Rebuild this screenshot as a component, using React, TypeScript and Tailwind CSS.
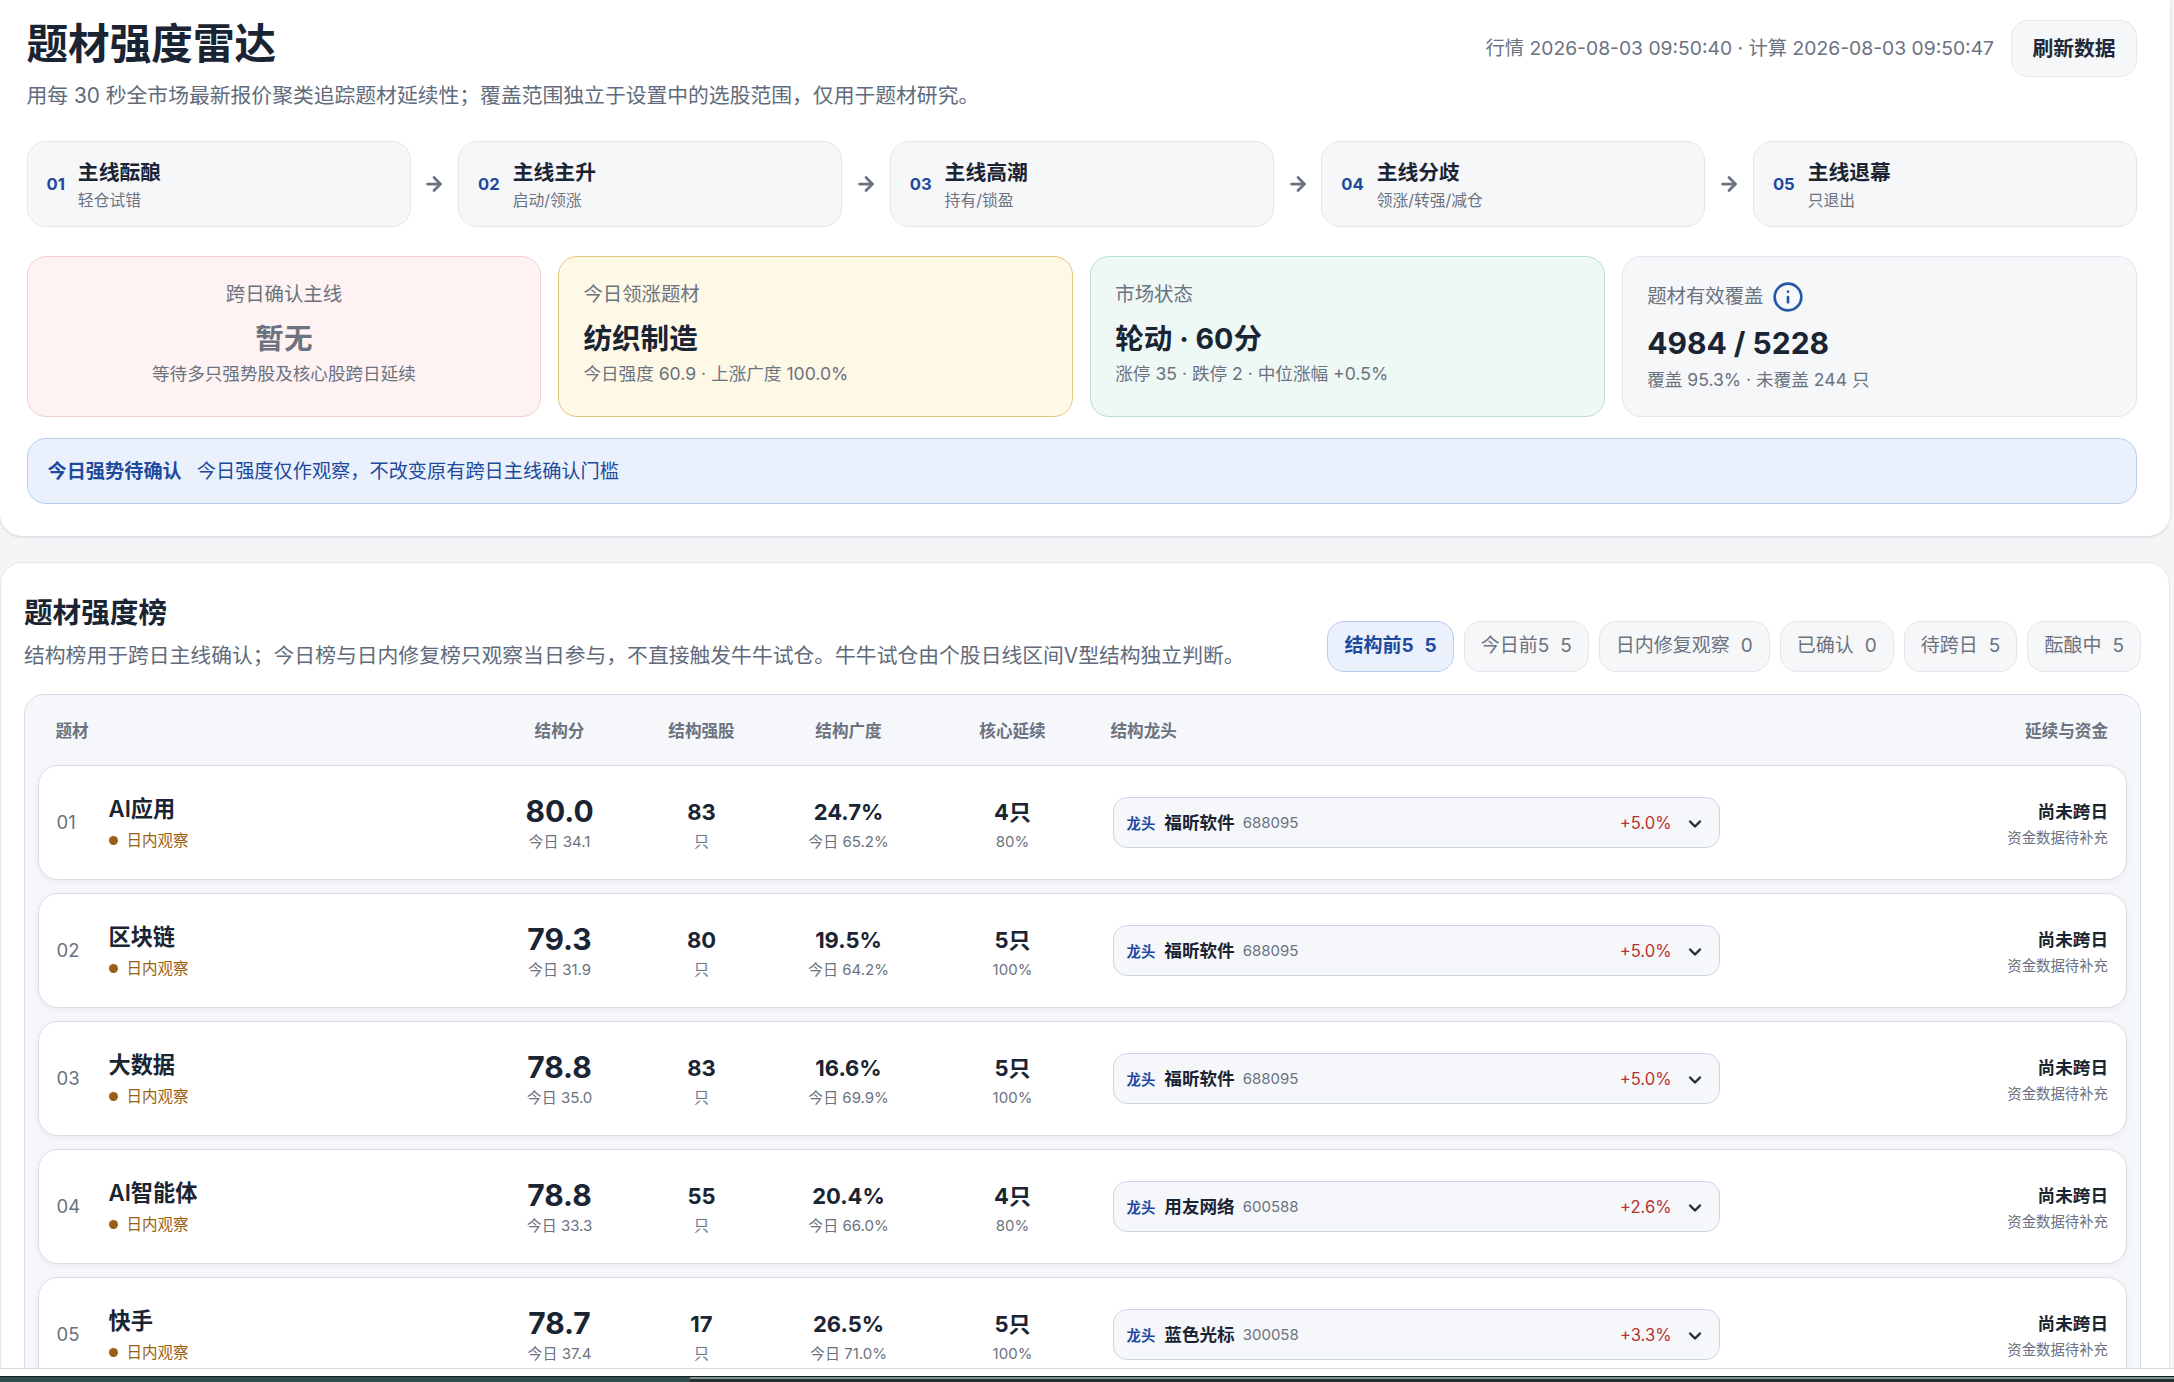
import React from 'react';
import { ArrowRight, ChevronDown, Info } from 'lucide-react';

const STEPS = [
  { no: '01', title: '主线酝酿', sub: '轻仓试错' },
  { no: '02', title: '主线主升', sub: '启动/领涨' },
  { no: '03', title: '主线高潮', sub: '持有/锁盈' },
  { no: '04', title: '主线分歧', sub: '领涨/转强/减仓' },
  { no: '05', title: '主线退幕', sub: '只退出' },
];

const TABS = [
  { text: '结构前5', count: 5, active: true },
  { text: '今日前5', count: 5 },
  { text: '日内修复观察', count: 0 },
  { text: '已确认', count: 0 },
  { text: '待跨日', count: 5 },
  { text: '酝酿中', count: 5 },
];

const ROWS = [
  { no: '01', name: 'AI应用', score: '80.0', today: '今日 34.1', strong: '83', breadth: '24.7%', breadthToday: '今日 65.2%', core: '4只', corePct: '80%', leader: '福昕软件', code: '688095', pct: '+5.0%' },
  { no: '02', name: '区块链', score: '79.3', today: '今日 31.9', strong: '80', breadth: '19.5%', breadthToday: '今日 64.2%', core: '5只', corePct: '100%', leader: '福昕软件', code: '688095', pct: '+5.0%' },
  { no: '03', name: '大数据', score: '78.8', today: '今日 35.0', strong: '83', breadth: '16.6%', breadthToday: '今日 69.9%', core: '5只', corePct: '100%', leader: '福昕软件', code: '688095', pct: '+5.0%' },
  { no: '04', name: 'AI智能体', score: '78.8', today: '今日 33.3', strong: '55', breadth: '20.4%', breadthToday: '今日 66.0%', core: '4只', corePct: '80%', leader: '用友网络', code: '600588', pct: '+2.6%' },
  { no: '05', name: '快手', score: '78.7', today: '今日 37.4', strong: '17', breadth: '26.5%', breadthToday: '今日 71.0%', core: '5只', corePct: '100%', leader: '蓝色光标', code: '300058', pct: '+3.3%' },
];

const GRID = 'grid grid-cols-[52px_381px_140px_144px_150px_178px_618px_1fr] items-center';

const Metric: React.FC<{ main: string; sub: string }> = ({ main, sub }) => (
  <div className="flex flex-col items-center pt-[5px]">
    <div className="text-[22px] leading-[30px] font-bold text-[#1a2433]">{main}</div>
    <div className="mt-[4px] text-[15px] leading-[22px] text-[#6b7280]">{sub}</div>
  </div>
);

export default function App() {
  return (
    <div
      className="h-[1382px] w-[2174px] overflow-hidden bg-white text-[#1a2433]"
      style={{ fontFamily: 'Inter, "Noto Sans CJK SC", sans-serif' }}
    >
      <main className="h-[1368px] overflow-hidden bg-[#f4f5f7]">
        <section className="w-[2170px] rounded-b-[22px] bg-white pt-[20px] pr-[33px] pb-[32px] pl-[26.5px] shadow-[0_1px_3px_rgba(30,41,59,0.16)]">
          <div className="flex items-start justify-between">
            <div>
              <h1 className="text-[41.6px] leading-[48px] font-bold">题材强度雷达</h1>
              <p className="mt-[14px] text-[20.8px] leading-[28px] text-[#5f6b7c]">
                用每 30 秒全市场最新报价聚类追踪题材延续性；覆盖范围独立于设置中的选股范围，仅用于题材研究。
              </p>
            </div>
            <div className="flex items-center gap-[17px]">
              <span className="text-[19.3px] text-[#6b7280]">
                行情 2026-08-03 09:50:40 · 计算 2026-08-03 09:50:47
              </span>
              <button className="h-[57px] w-[126px] rounded-[17px] border border-[#e5e7eb] bg-[#f6f7f9] text-[20.8px] font-bold text-[#1f2937]">
                刷新数据
              </button>
            </div>
          </div>

          <div className="mt-[31px] flex items-center">
            {STEPS.map((step, i) => (
              <React.Fragment key={step.no}>
                {i > 0 && (
                  <div className="flex w-[47.5px] shrink-0 justify-center">
                    <ArrowRight size={22} strokeWidth={3} className="text-[#6b7280]" />
                  </div>
                )}
                <div className="flex h-[86px] flex-1 items-center gap-[13px] rounded-[19px] border border-[#e3e6ec] bg-[#f6f7f9] pl-[19px]">
                  <span className="text-[16.6px] font-bold text-[#1e4a9c]">{step.no}</span>
                  <div>
                    <div className="pt-[2px] text-[20.8px] leading-[30px] font-semibold">{step.title}</div>
                    <div className="mt-[1px] text-[15.8px] leading-[24px] text-[#6b7280]">{step.sub}</div>
                  </div>
                </div>
              </React.Fragment>
            ))}
          </div>

          <div className="mt-[29px] grid grid-cols-4 gap-[17px]">
            <div className="flex h-[161px] flex-col items-center rounded-[19px] border border-[#f5cfcc] bg-[#fef3f2] px-[24px] pt-[25px] text-center">
              <div className="text-[19.4px] leading-[24px] text-[#6b7280]">跨日确认主线</div>
              <div className="mt-[13px] text-[28.6px] leading-[40px] font-bold text-[#6b7280]">暂无</div>
              <div className="mt-[3px] text-[17.6px] leading-[24px] text-[#6b7280]">等待多只强势股及核心股跨日延续</div>
            </div>
            <div className="h-[161px] rounded-[19px] border border-[#e3c77f] bg-[#fef8e7] px-[24px] pt-[25px]">
              <div className="text-[19.4px] leading-[24px] text-[#6b7280]">今日领涨题材</div>
              <div className="mt-[13px] text-[28.6px] leading-[40px] font-bold">纺织制造</div>
              <div className="mt-[3px] text-[17.6px] leading-[24px] text-[#6b7280]">今日强度 60.9 · 上涨广度 100.0%</div>
            </div>
            <div className="h-[161px] rounded-[19px] border border-[#b7e0d0] bg-[#eef8f5] px-[24px] pt-[25px]">
              <div className="text-[19.4px] leading-[24px] text-[#6b7280]">市场状态</div>
              <div className="mt-[13px] text-[28.6px] leading-[40px] font-bold">轮动 · 60分</div>
              <div className="mt-[3px] text-[17.6px] leading-[24px] text-[#6b7280]">涨停 35 · 跌停 2 · 中位涨幅 +0.5%</div>
            </div>
            <div className="h-[161px] rounded-[19px] border border-[#e3e6ec] bg-[#f6f7f9] px-[24px] pt-[26px]">
              <div className="flex h-[27px] items-center gap-[9px] text-[19.4px] text-[#6b7280]">
                <span>题材有效覆盖</span>
                <Info size={32} strokeWidth={2} className="text-[#2558a8]" />
              </div>
              <div className="mt-[13px] text-[30px] leading-[40px] font-bold">4984 / 5228</div>
              <div className="mt-[5px] text-[17.6px] leading-[24px] text-[#6b7280]">覆盖 95.3% · 未覆盖 244 只</div>
            </div>
          </div>

          <div className="mt-[21px] flex h-[66px] items-center gap-[15px] rounded-[19px] border border-[#b8cdea] bg-[#eaf1fd] pl-[20px] text-[19.2px] text-[#1e4a9c]">
            <span className="font-bold">今日强势待确认</span>
            <span>今日强度仅作观察，不改变原有跨日主线确认门槛</span>
          </div>
        </section>

        <section className="mt-[26px] w-[2170px] rounded-t-[22px] border border-[#e5e7eb] bg-white pt-[30px]">
          <div className="flex items-end justify-between pr-[28px] pl-[23px]">
            <div className="pb-[2px]">
              <h2 className="text-[28.6px] leading-[40px] font-bold">题材强度榜</h2>
              <p className="mt-[9px] text-[20.8px] leading-[28px] text-[#5f6b7c]">
                结构榜用于跨日主线确认；今日榜与日内修复榜只观察当日参与，不直接触发牛牛试仓。牛牛试仓由个股日线区间V型结构独立判断。
              </p>
            </div>
            <div className="flex gap-[10px]">
              {TABS.map((tab) => (
                <div
                  key={tab.text}
                  className={
                    tab.active
                      ? 'flex h-[51px] items-center gap-[11px] rounded-[17px] border border-[#b8cdea] bg-[#eaf1fd] px-[16px] text-[19px] font-bold text-[#1e4a9c]'
                      : 'flex h-[51px] items-center gap-[11px] rounded-[17px] border border-[#e3e6ec] bg-[#f6f7f9] px-[16px] text-[19px] text-[#6b7280]'
                  }
                >
                  <span>{tab.text}</span>
                  <span>{tab.count}</span>
                </div>
              ))}
            </div>
          </div>

          <div className="mt-[22px] ml-[22.5px] w-[2117.5px] rounded-t-[20px] border border-[#d5dde9] bg-[#f5f7fb] pb-[20px]">
            <div className={`${GRID} h-[70px] px-[32px] pt-[2px] text-[16.6px] font-semibold text-[#6b7280]`}>
              <div className="col-span-2 -ml-[1px]">题材</div>
              <div className="text-center">结构分</div>
              <div className="text-center">结构强股</div>
              <div className="text-center">结构广度</div>
              <div className="text-center">核心延续</div>
              <div className="ml-[9px]">结构龙头</div>
              <div className="text-right">延续与资金</div>
            </div>

            <div className="flex flex-col gap-[13px] px-[13px]">
              {ROWS.map((row) => (
                <div
                  key={row.no}
                  className={`${GRID} h-[115px] rounded-[20px] border border-[#d8dee9] bg-white px-[18px] shadow-[0_2px_6px_rgba(30,41,59,0.06)]`}
                >
                  <div className="text-[18.5px] text-[#6b7280]">{row.no}</div>
                  <div>
                    <div className="text-[22.2px] leading-[30px] font-semibold">{row.name}</div>
                    <div className="mt-[6px] flex items-center gap-[9px] text-[15.5px] leading-[22px] text-[#9a5f12]">
                      <span className="h-[9px] w-[9px] rounded-full bg-[#9a5f12]" />
                      <span>日内观察</span>
                    </div>
                  </div>
                  <div className="flex flex-col items-center">
                    <div className="text-[30px] leading-[38px] font-bold">{row.score}</div>
                    <div className="mt-[1px] text-[15px] leading-[22px] text-[#6b7280]">{row.today}</div>
                  </div>
                  <Metric main={row.strong} sub="只" />
                  <Metric main={row.breadth} sub={row.breadthToday} />
                  <Metric main={row.core} sub={row.corePct} />
                  <div className="ml-[11px] flex h-[51px] w-[607px] items-center rounded-[14px] border border-[#ccd5e4] bg-[#f5f7fb] pt-[2px] pr-[14px] pl-[13px]">
                    <span className="text-[14.4px] font-semibold text-[#1e4a9c]">龙头</span>
                    <span className="ml-[9px] text-[17.6px] font-semibold">{row.leader}</span>
                    <span className="ml-[8px] text-[15px] text-[#6b7280]">{row.code}</span>
                    <span className="ml-auto text-[16.6px] text-[#b93030]">{row.pct}</span>
                    <ChevronDown size={20} strokeWidth={2.8} className="ml-[13px] text-[#1f2937]" />
                  </div>
                  <div className="pt-[3px] text-right">
                    <div className="text-[17.6px] leading-[26px] font-semibold">尚未跨日</div>
                    <div className="mt-[2px] text-[14.4px] leading-[22px] text-[#6b7280]">资金数据待补充</div>
                  </div>
                </div>
              ))}
            </div>
          </div>
        </section>
      </main>

      <div className="h-[8px] border-t border-[#d9d9d9] bg-white" />
      <div className="flex h-[6px]">
        <div className="w-[690px] border-t border-[#10201e] bg-[#2f4f4c]" />
        <div className="flex flex-1 flex-col">
          <div className="h-[1px] bg-[#141c1b]" />
          <div className="h-[2px] bg-[#7d9a90]" />
          <div className="h-[3px] bg-[#24302f]" />
        </div>
      </div>
    </div>
  );
}
